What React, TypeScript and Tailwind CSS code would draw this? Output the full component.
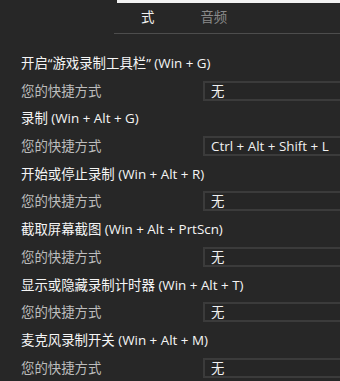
const groups = [
  { title: "开启“游戏录制工具栏” (Win + G)", value: "无" },
  { title: "录制 (Win + Alt + G)", value: "Ctrl + Alt + Shift + L" },
  { title: "开始或停止录制 (Win + Alt + R)", value: "无" },
  { title: "截取屏幕截图 (Win + Alt + PrtScn)", value: "无" },
  { title: "显示或隐藏录制计时器 (Win + Alt + T)", value: "无" },
  { title: "麦克风录制开关 (Win + Alt + M)", value: "无" },
];

export default function App() {
  return (
    <div
      className="h-[381px] w-[340px] overflow-hidden bg-[#272727] text-[13.4px]"
      style={{ fontFamily: '"Open Sans", "Noto Sans CJK SC", sans-serif' }}
    >
      {/* tab strip */}
      <div className="flex h-[34px]">
        <div className="w-[114px] shrink-0" />
        <div className="flex flex-1 flex-col border-b border-[#4d4d4d]">
          <div className="ml-[3px] h-[3px] bg-[#f2f2f2]" />
          <div className="flex flex-1 items-center pb-[2px]">
            <span className="ml-[27px] text-[#f0f0f0]">式</span>
            <span className="ml-[46px] text-[#8a8a8a]">音频</span>
          </div>
        </div>
      </div>

      <div className="pl-[21px] pt-[15px]">
        {groups.map((g) => (
          <div key={g.title} className="flex flex-col">
            <div className="flex h-[28px] items-center text-[#f5f5f5]">{g.title}</div>
            <div className="flex h-[27.4px] items-center">
              <span className="w-[182px] shrink-0 text-[#bdbdbd]">您的快捷方式</span>
              <div className="flex h-[20px] flex-1 items-center border-2 border-r-0 border-[#3b3b3b] bg-[#262626] pl-[6px] text-[#f0f0f0]">
                {g.value}
              </div>
            </div>
          </div>
        ))}
      </div>
    </div>
  );
}
